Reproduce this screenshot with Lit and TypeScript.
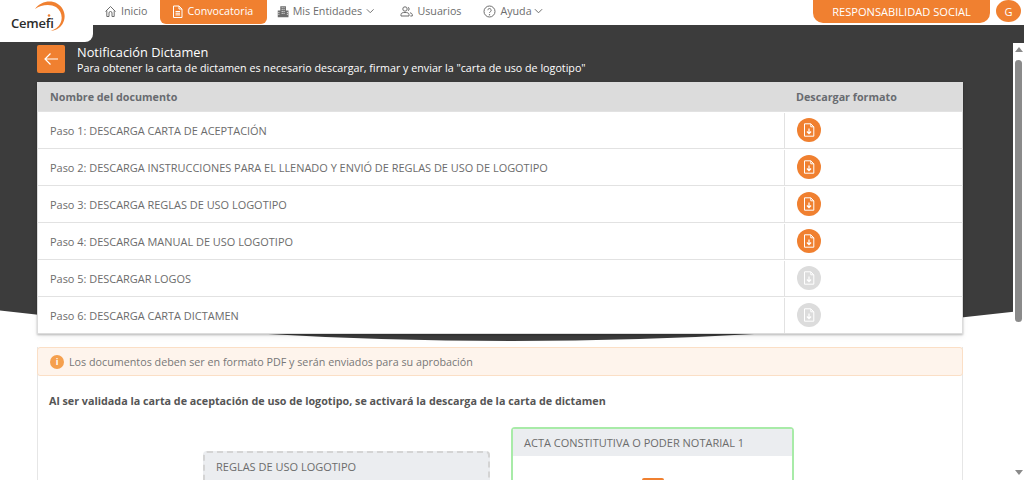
import { LitElement, html, css, svg } from "lit";
import { customElement } from "lit/decorators.js";

const chevron = html`<svg class="chev" viewBox="0 0 10 6" width="9" height="6"><path d="M1 1l4 4 4-4" fill="none" stroke="currentColor" stroke-width="1.1"/></svg>`;

const icons = {
  home: svg`<path d="M1.500 6.500L6.500 1.500l5 5M2.800 5.500V11.500H5V8a1.500 1.500 0 0 1 3 0v3.500h2.200V5.500" fill="none" stroke="currentColor" stroke-width="1"/>`,
  doc: svg`<path d="M2.500 1h5.500l3 3v8.500h-8.500zM8 1v3h3M4.500 6.500h4.500M4.500 8.200h4.500M4.500 9.900h4.500" fill="none" stroke="currentColor" stroke-width="1"/>`,
  build: svg`<path d="M3.500 1h6v11.500h-6zM.8 5.500h2.700v7H.8zM9.500 5.500h2.700v7H9.500z" fill="currentColor"/><path d="M5 2.500h1M7 2.500h1M5 4.500h1M7 4.500h1M5 6.500h1M7 6.500h1M5 8.500h1M7 8.500h1M1.500 7.500h1M10.500 7.500h1M1.500 9.500h1M10.500 9.500h1" stroke="#fff" stroke-width="1"/>`,
  users: svg`<circle cx="5" cy="4" r="2.200" fill="none" stroke="currentColor"/><path d="M1 11v-1.500c0-1.500 1.500-2 4-2s4 .5 4 2V11zM8 2.200a2 2 0 0 1 0 3.600M10 7.800c1.500.3 2.300 1 2.300 2V11h-2" fill="none" stroke="currentColor"/>`,
  help: svg`<circle cx="6.500" cy="6.500" r="5.500" fill="none" stroke="currentColor"/><path d="M4.800 5.200a1.700 1.700 0 1 1 2.600 1.500c-.6.400-.9.700-.9 1.300" fill="none" stroke="currentColor"/><circle cx="6.500" cy="9.800" r=".7" fill="currentColor"/>`,
};

const navIcon = (k: keyof typeof icons) => html`<svg class="nav-ic" viewBox="0 0 13 13" width="13" height="13">${icons[k]}</svg>`;

const fileDown = html`<svg viewBox="0 0 24 24" width="24" height="24"><path d="M7.500 5.800h6.300l3 3v9.400h-9.300zM13.800 5.800v3h3" fill="none" stroke="#fff" stroke-width="1"/><path d="M12 10.500v5M9.900 13.500l2.100 2.200 2.100-2.200" fill="none" stroke="#fff" stroke-width="1.200"/></svg>`;

const rows = [
  ["Paso 1: DESCARGA CARTA DE ACEPTACIÓN", true],
  ["Paso 2: DESCARGA INSTRUCCIONES PARA EL LLENADO Y ENVIÓ DE REGLAS DE USO DE LOGOTIPO", true],
  ["Paso 3: DESCARGA REGLAS DE USO LOGOTIPO", true],
  ["Paso 4: DESCARGA MANUAL DE USO LOGOTIPO", true],
  ["Paso 5: DESCARGAR LOGOS", false],
  ["Paso 6: DESCARGA CARTA DICTAMEN", false],
] as const;

@customElement("app-root")
export class AppRoot extends LitElement {
  static styles = css`
    :host { display: block; position: relative; width: 1024px; height: 480px; overflow: hidden; background: #fff;
      font-family: "Open Sans", "Liberation Sans", sans-serif; font-size: 10.75px; color: #6c6c6c; }
    .band { position: absolute; left: 0; top: 25px; }
    .logo { position: absolute; left: 0; top: 0; width: 93px; height: 42px; background: #fff; border-bottom-right-radius: 8px; z-index: 2; }
    .logo svg { position: absolute; left: 30px; top: 0; }
    .logo span { position: absolute; left: 11px; top: 13px; font-size: 13px; font-weight: 600; color: #2b2b2b; line-height: 20px; letter-spacing: -.2px; }
    header { position: relative; z-index: 1; height: 25px; display: flex; align-items: stretch; padding-left: 104px; color: #6d6d6d; font-size: 10.7px; box-sizing: border-box; }
    .nav { display: flex; align-items: center; gap: 4px; height: 24px; white-space: nowrap; padding-bottom: 2px; box-sizing: border-box; }
    .nav.home { margin-right: 13px; }
    .nav.active { background: #f08030; color: #fff; border-radius: 0 0 6px 6px; gap: 3px; width: 107px; padding: 0 0 2px 11px; margin-right: 10px; }
    .nav.ent { gap: 3px; width: 97px; margin-right: 26px; }
    .nav.usr { margin-right: 22px; }
    .chev { margin-left: 1px; }
    .nav.help .chev { margin-left: -2px; }
    .spacer { flex: 1; }
    .resp { width: 177px; height: 23px; background: #f08030; color: #fff; border-radius: 0 0 10px 10px; display: flex; align-items: center; justify-content: center; font-size: 11.1px; }
    .avatar { width: 25px; height: 22px; margin: 0 3px 0 6px; border-radius: 50%; background: #f08030; color: #fff; display: flex; align-items: center; justify-content: center; font-size: 11px; }
    .body { position: relative; display: flex; height: 455px; }
    .content { width: 926px; margin-left: 37px; padding-top: 20px; }
    .title-row { display: flex; gap: 12px; height: 28px; align-items: center; color: #fff; }
    .back { width: 28px; height: 28px; background: #f08030; border-radius: 2px; display: flex; align-items: center; justify-content: center; }
    .t1 { font-size: 12.8px; line-height: 16px; margin-top: 1px; }
    .t2 { font-size: 10.73px; line-height: 14px; margin-top: 1px; }
    .table { margin-top: 9px; background: #fff; box-shadow: 0 1px 2px rgba(0,0,0,.25), 0 3px 6px rgba(0,0,0,.06); }
    .tr { display: grid; grid-template-columns: 746px 1fr; height: 37px; border-top: 1px solid #e2e2e2; box-sizing: border-box; font-size: 10.95px; padding-top: 1px; border-right: 1px solid #dcdcdc; border-left: 1px solid #dcdcdc; }
    .tr.head { background: #dcdcdc; height: 29px; border-top: 0; font-weight: 700; color: #686b70; font-size: 10.75px; padding-top: 0; }
    .tr.last { height: 38px; border-bottom: 1px solid #dcdcdc; }
    .c1 { padding-left: 12px; display: flex; align-items: center; }
    .c2 { padding-left: 12px; display: flex; align-items: center; border-left: 1px solid #e2e2e2; }
    .head .c2 { border-left: 0; padding-left: 12px; }
    .dl { width: 24px; height: 24px; border-radius: 50%; background: #f08030; display: block; margin-top: -1px; }
    .dl.off { background: #dcdcdc; }
    .panel { margin-top: 13px; height: 160px; background: #fff; border: 1px solid #e6e6e6; border-top: 0; box-sizing: border-box; }
    .alert { height: 29px; margin: 0 -1px; background: #fef4ec; border: 1px solid #fbdfc6; border-radius: 3px; box-sizing: border-box; display: flex; align-items: center; gap: 5px; padding-left: 12px; color: #777; }
    .alert i { width: 14px; height: 14px; border-radius: 50%; background: #f5a04e; color: #fff; font-style: normal; font-size: 9px; font-weight: 700; display: flex; align-items: center; justify-content: center; }
    .strong { margin: 17px 0 0 11px; line-height: 16px; font-weight: 700; color: #555; }
    .cards { display: flex; gap: 21px; align-items: flex-start; padding: 18px 0 0 165px; }
    .card { box-sizing: border-box; font-size: 11px; }
    .dash { width: 287px; margin-top: 24px; height: 60px; background: #ebedf0; border: 2px dashed #d4d4d4; border-radius: 4px; padding: 5px 11px; line-height: 18px; }
    .green { width: 283px; height: 80px; border: 2px solid #a8eba8; border-radius: 4px; }
    .green .h { height: 27px; background: #ebedf0; padding-left: 11px; display: flex; align-items: center; }
    .green .b { width: 22px; height: 4px; margin: 22px auto 0; background: #f08030; border-radius: 2px 2px 0 0; }
    .scroll { margin: 18px 0 0 50px; width: 11px; background: #fff; display: flex; flex-direction: column; align-items: center; }
    .arrow { width: 0; height: 0; border-left: 4px solid transparent; border-right: 4px solid transparent; margin-top: 4px; }
    .arrow.up { border-bottom: 5px solid #8a8a8a; }
    .thumb { width: 7px; height: 262px; background: #8a8a8a; border-radius: 4px; margin-top: 8px; }
    .arrow.down { border-top: 5px solid #8a8a8a; margin-top: 148px; }
  `;

  render() {
    return html`
      <svg class="band" width="1024" height="330" viewBox="0 25 1024 330"><path d="M0 25H1024V310.500Q512 371.500 0 310.500Z" fill="#3c3c3c"/></svg>
      <div class="logo">
        <svg width="40" height="36" viewBox="30 0 40 36">
          <path d="M35 9C40 2 50-.500 57 3.500c8 4.500 9.500 14 5.500 20.500-3 4.500-7 6.500-12 7 4-1.500 8-3.500 10-8 2.500-5.500 1-12-4.500-16C50.500 3.500 41 4.500 35 9z" fill="#f08030"/>
          <circle cx="49" cy="15.500" r="1.300" fill="#f08030"/>
        </svg>
        <span>Cemefi</span>
      </div>
      <header>
        <div class="nav home">${navIcon("home")}<span>Inicio</span></div>
        <div class="nav active">${navIcon("doc")}<span>Convocatoria</span></div>
        <div class="nav ent">${navIcon("build")}<span>Mis Entidades</span>${chevron}</div>
        <div class="nav usr">${navIcon("users")}<span>Usuarios</span></div>
        <div class="nav help">${navIcon("help")}<span>Ayuda</span>${chevron}</div>
        <div class="spacer"></div>
        <div class="resp">RESPONSABILIDAD SOCIAL</div>
        <div class="avatar">G</div>
      </header>
      <div class="body">
        <div class="content">
          <div class="title-row">
            <div class="back"><svg width="16" height="14" viewBox="0 0 16 14"><path d="M15 7H2M7.500 1.500L2 7l5.500 5.500" fill="none" stroke="#fff" stroke-width="1.200"/></svg></div>
            <div>
              <div class="t1">Notificación Dictamen</div>
              <div class="t2">Para obtener la carta de dictamen es necesario descargar, firmar y enviar la "carta de uso de logotipo"</div>
            </div>
          </div>
          <div class="table">
            <div class="tr head"><div class="c1">Nombre del documento</div><div class="c2">Descargar formato</div></div>
            ${rows.map(([t, on], i) => html`<div class="tr ${i === 5 ? "last" : ""}">
              <div class="c1">${t}</div>
              <div class="c2"><span class="dl ${on ? "" : "off"}">${fileDown}</span></div>
            </div>`)}
          </div>
          <div class="panel">
            <div class="alert"><i>i</i><span>Los documentos deben ser en formato PDF y serán enviados para su aprobación</span></div>
            <div class="strong">Al ser validada la carta de aceptación de uso de logotipo, se activará la descarga de la carta de dictamen</div>
            <div class="cards">
              <div class="card dash">REGLAS DE USO LOGOTIPO</div>
              <div class="card green"><div class="h">ACTA CONSTITUTIVA O PODER NOTARIAL 1</div><div class="b"></div></div>
            </div>
          </div>
        </div>
        <div class="scroll">
          <div class="arrow up"></div>
          <div class="thumb"></div>
          <div class="arrow down"></div>
        </div>
      </div>
    `;
  }
}
